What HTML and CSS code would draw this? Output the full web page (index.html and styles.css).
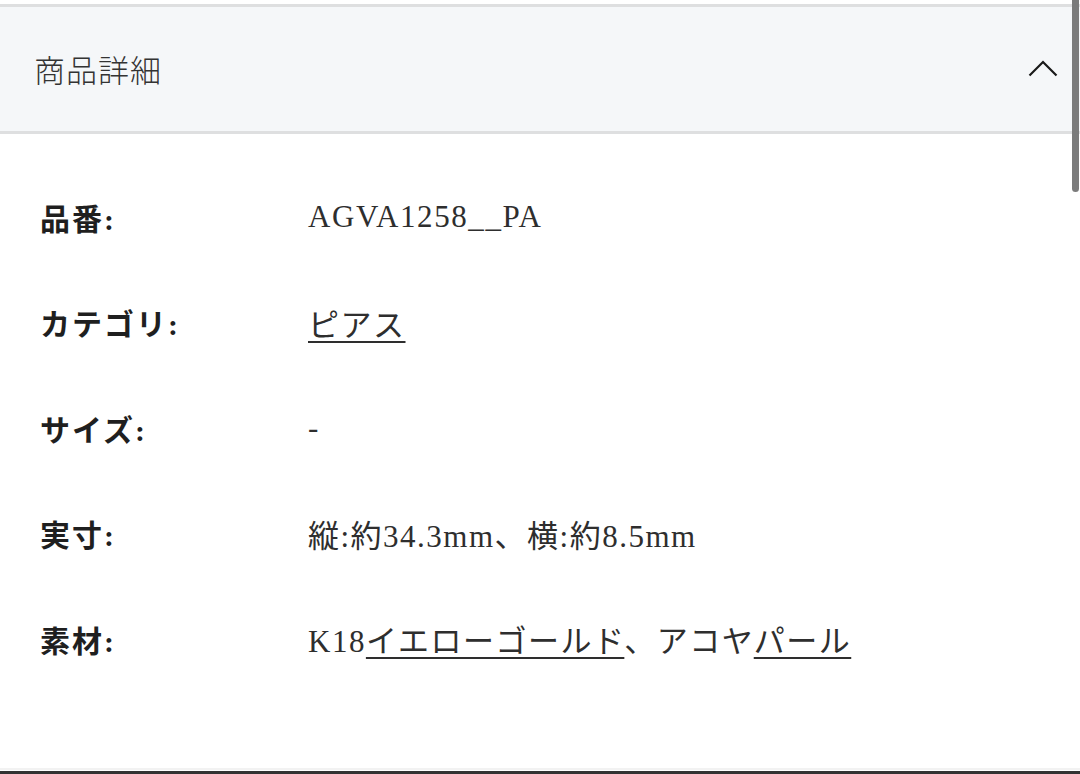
FILE: index.html
```html
<!DOCTYPE html>
<html lang="ja">
<head>
<meta charset="utf-8">
<link rel="stylesheet" href="styles.css">
</head>
<body>
<div class="page">
  <section class="accordion">
    <div class="acc-head">
      <span class="acc-title">商品詳細</span>
      <svg class="chev" width="30" height="20" viewBox="0 0 30 20"><path d="M1.5 17.5 L15 4 L28.5 17.5" fill="none" stroke="#1a1a1a" stroke-width="2.2"/></svg>
    </div>
    <div class="acc-body">
      <div class="row"><div class="label">品番:</div><div class="value latin">AGVA1258__PA</div></div>
      <div class="row"><div class="label">カテゴリ:</div><div class="value"><a class="link">ピアス</a></div></div>
      <div class="row"><div class="label">サイズ:</div><div class="value">-</div></div>
      <div class="row"><div class="label">実寸:</div><div class="value">縦:約34.3mm、横:約8.5mm</div></div>
      <div class="row"><div class="label">素材:</div><div class="value">K18<a class="link">イエローゴールド</a>、アコヤ<a class="link">パール</a></div></div>
    </div>
    <div class="acc-foot"></div>
  </section>
  <div class="scroll-thumb"></div>
</div>
</body>
</html>
```
FILE: styles.css
```css
html, body {
  margin: 0;
  padding: 0;
  background: #ffffff;
}
.page {
  position: relative;
  width: 1080px;
  height: 774px;
  overflow: hidden;
  padding-top: 4px;
  box-sizing: border-box;
  font-family: "Liberation Serif", "Noto Sans CJK JP", serif;
  color: #2a2a2a;
}
.acc-head {
  height: 124px;
  background: #f5f7f9;
  border-top: 3px solid #dedfe0;
  border-bottom: 3px solid #dedfe0;
  display: flex;
  align-items: center;
  justify-content: space-between;
  padding: 0 22px 0 34px;
}
.acc-title {
  font-size: 31px;
  font-weight: 300;
  color: #333333;
  font-family: "Noto Sans CJK JP", sans-serif;
  letter-spacing: 1px;
  margin-top: -2px;
}
.chev {
  margin-top: -2px;
}
.acc-body {
  padding: 30px 0 0 40px;
  height: 634px;
  box-sizing: border-box;
}
.row {
  display: grid;
  grid-template-columns: 268px 1fr;
  align-items: center;
  height: 105.5px;
}
.label {
  font-size: 30px;
  font-weight: 600;
  color: #1f1f1f;
  letter-spacing: 2px;
}
.value {
  font-size: 31px;
  color: #2e2e2e;
  letter-spacing: 1.5px;
}
.value.latin {
  letter-spacing: 1.6px;
}
.link {
  color: inherit;
  text-decoration: underline;
  text-decoration-thickness: 2px;
  text-underline-offset: 5px;
}
.acc-foot {
  border-top: 2px solid #f2f2f2;
  border-bottom: 3px solid #333333;
  height: 1px;
}
.scroll-thumb {
  position: absolute;
  top: 0;
  right: 1px;
  width: 7px;
  height: 192px;
  background: #7b7b7b;
  border-radius: 0 0 4px 4px;
}
```
